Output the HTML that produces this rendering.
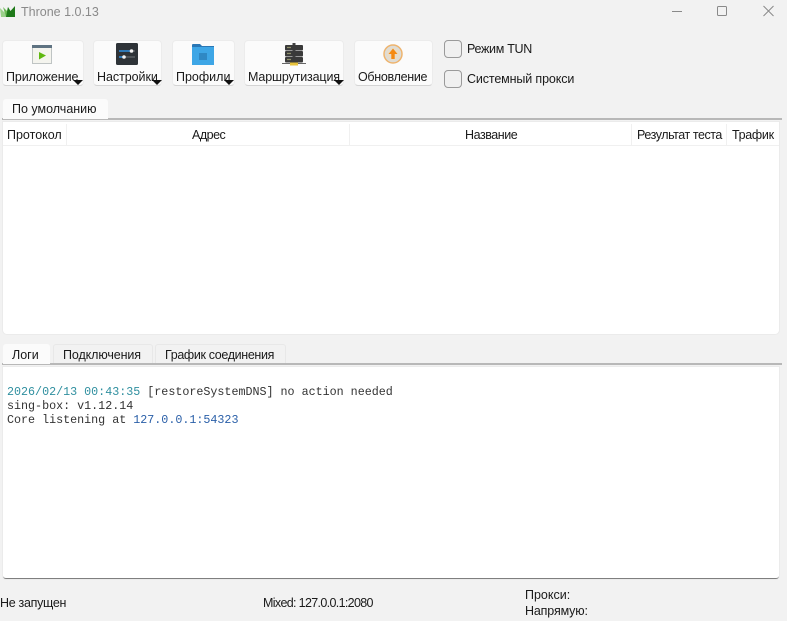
<!DOCTYPE html>
<html><head><meta charset="utf-8"><style>
html,body{margin:0;padding:0;width:787px;height:621px;overflow:hidden;background:#f2f2f2;font-family:"Liberation Sans",sans-serif;font-size:12.5px;color:#1a1a1a}
.a{position:absolute;white-space:nowrap}
.t{position:absolute;white-space:nowrap;line-height:16px;height:16px}
.btn{position:absolute;top:40px;height:46px;background:#fbfbfb;border:1px solid #ececec;border-bottom:1px solid #d4d4d4;border-radius:4px;box-sizing:border-box}
.arr{position:absolute;width:0;height:0;border-left:5px solid transparent;border-right:5px solid transparent;border-top:5px solid #111;top:80px}
.cb{position:absolute;left:444px;width:16px;height:16px;border:1px solid #9a9a9a;border-radius:4px;background:#f0f0f0}
.line{position:absolute;background:#b8b8b8;height:2px}
.hd{position:absolute;top:124px;height:21px;width:1px;background:#f0f0f0}
.tab{position:absolute;box-sizing:border-box;border:1px solid #e8e8e8;border-bottom:0;border-radius:3px 3px 0 0}
.mono{font-family:"Liberation Mono",monospace;font-size:11.7px;line-height:14px;position:absolute;white-space:nowrap;color:#333}
</style></head><body>
<svg class="a" style="left:0;top:5px" width="16" height="12" viewBox="0 0 16 12"><path d="M0 3L5 8L6 12H1Z" fill="#9bd08a"/><path d="M3 2L7 6L8 2L9 12H6Z" fill="#6dbb58"/><path d="M6 12L8 2L10.500 6L15 1V12Z" fill="#1f7a1a"/></svg>
<div class="t" style="left:21px;top:4px;color:#8a8a8a">Throne 1.0.13</div>
<svg class="a" style="left:670px;top:4px" width="110" height="14" viewBox="0 0 110 14" fill="none" stroke="#8a8a8a" stroke-width="1"><path d="M2 7.500H12"/><rect x="47.500" y="2.500" width="9" height="9" rx="1"/><path d="M93.500 2L103.500 12M103.500 2L93.500 12"/></svg>

<div class="btn" style="left:2px;width:82px"></div>
<svg class="a" style="left:32px;top:45px" width="20" height="19" viewBox="0 0 20 19"><rect x=".5" y=".5" width="19" height="18" fill="#f4f4ee" stroke="#bfc4c4" stroke-width="1"/><rect width="20" height="3" fill="#5f7382"/><path d="M7 7L14 10.500L7 14.500Z" fill="#5fb80f"/></svg>
<div class="t" style="left:6px;top:69px;letter-spacing:-.1px">Приложение</div><div class="arr" style="left:73px"></div>

<div class="btn" style="left:93px;width:69px"></div>
<svg class="a" style="left:116px;top:43px" width="22" height="22" viewBox="0 0 22 22"><rect width="22" height="22" rx="1.500" fill="#2e3338"/><path d="M3 8H15" stroke="#2f8fe0" stroke-width="1.500"/><path d="M15 8H19M9 14H19" stroke="#5a5f64" stroke-width="1.500"/><path d="M3 14H8" stroke="#2f8fe0" stroke-width="1.500"/><circle cx="15.500" cy="8" r="1.800" fill="#f2f2f2"/><circle cx="8" cy="14" r="1.800" fill="#f2f2f2"/></svg>
<div class="t" style="left:97px;top:69px;letter-spacing:-.05px">Настройки</div><div class="arr" style="left:152px"></div>

<div class="btn" style="left:172px;width:63px"></div>
<svg class="a" style="left:192px;top:44px" width="22" height="21" viewBox="0 0 22 21"><path d="M0 1Q0 0 1 0H8L10 2H22V5H0Z" fill="#2a77b5"/><rect y="3" width="22" height="18" fill="#3ea6e6"/><rect x="7" y="9" width="8" height="7" fill="#2f88c4"/></svg>
<div class="t" style="left:176px;top:69px">Профили</div><div class="arr" style="left:224px"></div>

<div class="btn" style="left:244px;width:100px"></div>
<svg class="a" style="left:282px;top:43px" width="24" height="23" viewBox="0 0 24 23"><rect x="10.500" y="0" width="3" height="21" fill="#444"/><rect x="3" y="2" width="18" height="5.500" rx="1" fill="#3a3a3a"/><rect x="3" y="8" width="18" height="5.500" rx="1" fill="#3a3a3a"/><rect x="3" y="14" width="18" height="5.500" rx="1" fill="#3a3a3a"/><path d="M5 4.500H9M5 10.500H9M5 16.500H9" stroke="#90906a" stroke-width="1.200"/><rect y="20" width="24" height="1" fill="#666"/><rect x="8" y="19.500" width="8" height="3" fill="#e6c23c"/></svg>
<div class="t" style="left:248px;top:69px;letter-spacing:-.15px">Маршрутизация</div><div class="arr" style="left:334px"></div>

<div class="btn" style="left:354px;width:79px"></div>
<svg class="a" style="left:383px;top:44px" width="20" height="20" viewBox="0 0 20 20"><circle cx="10" cy="10" r="9" fill="#dcdcd8" stroke="#eeb46e" stroke-width="1.500"/><circle cx="10" cy="10" r="6.500" fill="#e8dcc8"/><path d="M10 4.500L14.500 10H11.700V15H8.300V10H5.500Z" fill="#f58a12"/></svg>
<div class="t" style="left:358px;top:69px;letter-spacing:-.3px">Обновление</div>

<div class="cb" style="top:40px"></div><div class="t" style="left:467px;top:41px;letter-spacing:-.3px">Режим TUN</div>
<div class="cb" style="top:70px"></div><div class="t" style="left:467px;top:71px;letter-spacing:-.13px">Системный прокси</div>

<div class="line" style="left:2px;top:118px;width:780px"></div>
<div class="a" style="left:3px;top:99px;width:105px;height:20px;background:#fbfbfb;border-radius:3px 3px 0 0"></div>
<div class="t" style="left:12px;top:101px">По умолчанию</div>

<div class="a" style="left:3px;top:122px;width:776px;height:212px;background:#fff;border-radius:0 0 4px 4px;box-shadow:0 0 0 1px #ebebeb"></div>
<div class="a" style="left:3px;top:145px;width:776px;height:1px;background:#f0f0f0"></div>
<div class="hd" style="left:66px"></div><div class="hd" style="left:349px"></div><div class="hd" style="left:631px"></div><div class="hd" style="left:726px"></div>
<div class="t" style="left:7px;top:127px">Протокол</div>
<div class="t" style="left:192px;top:127px;letter-spacing:-.5px">Адрес</div>
<div class="t" style="left:465px;top:127px;letter-spacing:-.45px">Название</div>
<div class="t" style="left:637px;top:127px;letter-spacing:-.45px">Результат теста</div>
<div class="t" style="left:732px;top:127px;letter-spacing:-.3px">Трафик</div>

<div class="line" style="left:2px;top:363px;width:780px"></div>
<div class="a" style="left:3px;top:344px;width:47px;height:20px;background:#fbfbfb;border-radius:3px 3px 0 0"></div>
<div class="tab" style="left:53px;top:344px;width:100px;height:19px"></div>
<div class="tab" style="left:155px;top:344px;width:131px;height:19px"></div>
<div class="t" style="left:12px;top:347px">Логи</div>
<div class="t" style="left:63px;top:347px;letter-spacing:-.1px">Подключения</div>
<div class="t" style="left:165px;top:347px;letter-spacing:-.35px">График соединения</div>

<div class="a" style="left:3px;top:367px;width:776px;height:212px;background:#fff;border-bottom:1px solid #7f7f7f;border-radius:0 0 3px 3px;box-sizing:border-box;box-shadow:0 0 0 1px #ebebeb"></div>
<div class="mono" style="left:7px;top:385px"><span style="color:#2f8f9f">2026/02/13 00:43:35</span> [restoreSystemDNS] no action needed</div>
<div class="mono" style="left:7px;top:399px">sing-box: v1.12.14</div>
<div class="mono" style="left:7px;top:413px">Core listening at <span style="color:#2a5fa8">127.0.0.1:54323</span></div>

<div class="t" style="left:0;top:595px;letter-spacing:-.3px">Не запущен</div>
<div class="t" style="left:263px;top:595px;letter-spacing:-.66px">Mixed: 127.0.0.1:2080</div>
<div class="t" style="left:525px;top:587px">Прокси:</div>
<div class="t" style="left:525px;top:603px;letter-spacing:-.15px">Напрямую:</div>
</body></html>
